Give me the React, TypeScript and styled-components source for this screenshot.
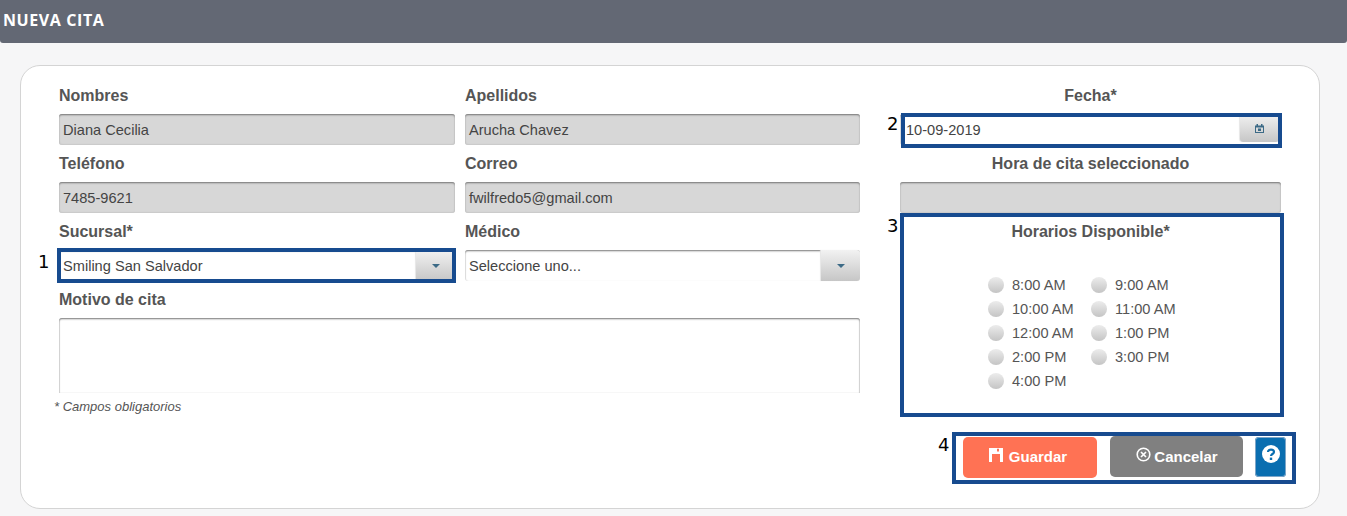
import React from 'react';
import styled, { createGlobalStyle } from 'styled-components';

const Global = createGlobalStyle`
  html, body { margin: 0; padding: 0; height: 516px; overflow: hidden; background: #f6f6f7; }
  * { box-sizing: border-box; }
  body {
    font-family: "Liberation Sans", Arial, sans-serif;
    color: #555;
  }
`;

const Header = styled.header`
  height: 43px;
  background: #636874;
  border-radius: 0 0 3px 3px;
  display: flex;
  align-items: center;
  padding: 0 0 3px 3px;
  color: #fff;
  font: 700 16px "Open Sans", sans-serif;
  letter-spacing: 0.6px;
`;

const Card = styled.main`
  margin: 22px 27px 0 20px;
  padding: 11px 38px 30px;
  background: #fff;
  border: 1px solid #d4d4d4;
  border-radius: 20px;
  display: flex;
  justify-content: space-between;
`;

const LeftArea = styled.section`
  width: 801px;
`;

const RightArea = styled.section`
  width: 381px;
`;

const Grid = styled.div`
  display: grid;
  grid-template-columns: 396px 395px;
  column-gap: 10px;
`;

const Field = styled.div<{ $wide?: boolean }>`
  position: relative;
  grid-column: ${(p) => (p.$wide ? '1 / -1' : 'auto')};
`;

const Label = styled.div<{ $center?: boolean }>`
  height: 37px;
  line-height: 37px;
  font-size: 16px;
  font-weight: 700;
  color: #555;
  text-align: ${(p) => (p.$center ? 'center' : 'left')};
`;

const Disabled = styled.div`
  height: 31px;
  padding: 0 4px;
  line-height: 32px;
  font-size: 14.6px;
  color: #444;
  background: #d7d7d7;
  border-radius: 3px;
  box-shadow: inset 0 2px 2px -1px #777, inset 0 0 2px #aaa;
`;

const Control = styled.div`
  height: 31px;
  display: flex;
  background: #fff;
  border-radius: 3px;
  box-shadow: inset 0 2px 2px -1px #777, inset 1px 0 1px #e0e0e0;
`;

const ControlText = styled.div<{ $inset?: number }>`
  flex: 1;
  padding: 0 4px 0 ${(p) => p.$inset ?? 4}px;
  line-height: 32px;
  font-size: 14.6px;
  color: #444;
`;

const SideButton = styled.div<{ $short?: boolean }>`
  width: 39px;
  height: ${(p) => (p.$short ? '28px' : '31px')};
  margin-right: ${(p) => (p.$short ? '2px' : '0')};
  display: flex;
  align-items: center;
  justify-content: center;
  background: linear-gradient(#f2f2f2, #c6c6c6);
  border-radius: 0 3px 3px ${(p) => (p.$short ? '3px' : '0')};
  box-shadow: -1px 0 1px #e6e6e6;
`;

const Caret = styled.span`
  width: 0;
  height: 0;
  border-left: 4px solid transparent;
  border-right: 4px solid transparent;
  border-top: 4px solid #3c6a86;
`;

const TextArea = styled.div`
  height: 75px;
  background: #fff;
  border-radius: 3px 3px 0 0;
  box-shadow: inset 0 2px 2px -1px #777, inset 1px 0 1px #d4d4d4, inset -1px 0 1px #d4d4d4;
`;

const Note = styled.p`
  margin: 6px 0 0 -5px;
  font-size: 13px;
  line-height: 15px;
  font-style: italic;
  color: #555;
`;

const Highlight = styled.div<{ $top: number; $right: number; $bottom: number; $left: number }>`
  position: absolute;
  top: ${(p) => p.$top}px;
  right: ${(p) => p.$right}px;
  bottom: ${(p) => p.$bottom}px;
  left: ${(p) => p.$left}px;
  border: 4px solid #174b8f;
  pointer-events: none;
`;

const Marker = styled.span<{ $top: number; $left: number }>`
  position: absolute;
  top: ${(p) => p.$top}px;
  left: ${(p) => p.$left}px;
  font: 18px/20px "DejaVu Sans", sans-serif;
  color: #000;
`;

const Slots = styled.div`
  position: relative;
  height: 204px;
  padding-top: 10px;
`;

const SlotsTitle = styled.div`
  font-size: 16px;
  font-weight: 700;
  line-height: 18px;
  text-align: center;
  color: #555;
`;

const SlotGrid = styled.div`
  margin-top: 32px;
  padding-left: 1px;
  display: grid;
  grid-template-columns: 103px 103px;
  grid-auto-rows: 24px;
  justify-content: center;
`;

const Slot = styled.div`
  display: flex;
  align-items: center;
  gap: 8px;
  font-size: 14.6px;
  color: #555;
`;

const Radio = styled.span`
  width: 16px;
  height: 16px;
  border-radius: 50%;
  background: linear-gradient(#ececec, #c4c4c4);
`;

const Actions = styled.div`
  position: relative;
  display: flex;
  align-items: flex-start;
  margin-top: 19px;
  padding-left: 63px;
  height: 42px;
`;

const ActionButton = styled.div<{ $bg: string; $w: number; $offset?: number; $gap?: number; $h?: number; $icon?: number; $pad?: string }>`
  flex: none;
  width: ${(p) => p.$w}px;
  height: ${(p) => p.$h ?? 41}px;
  margin-top: ${(p) => p.$offset ?? 0}px;
  margin-left: ${(p) => p.$gap ?? 0}px;
  padding: ${(p) => p.$pad ?? '0'};
  display: flex;
  align-items: center;
  justify-content: center;
  gap: ${(p) => p.$icon ?? 5}px;
  background: ${(p) => p.$bg};
  border-radius: 5px;
  color: #fff;
  font-size: 15px;
  font-weight: 700;
`;

const HelpButton = styled(ActionButton)`
  align-items: flex-start;
  padding: 8px 0 0;
  border-radius: 4px;
  box-shadow: inset 0 0 0 1px #7ea6c8;
`;

const FloppyIcon = () => (
  <svg width="14" height="14" viewBox="0 0 14 14" style={{ marginTop: -3 }}>
    <path fill="#fff" fillRule="evenodd" d="M0 0H14V14H11V6H3V14H0ZM8 0.800V3.500H10V0.800Z" />
  </svg>
);

const CancelIcon = () => (
  <svg width="15" height="15" viewBox="0 0 15 15" style={{ marginTop: -3 }}>
    <circle cx="7.500" cy="7.500" r="6.300" fill="none" stroke="#fff" strokeWidth="1.600" />
    <path d="M5 5L10 10M10 5L5 10" stroke="#fff" strokeWidth="1.700" />
  </svg>
);

const HelpIcon = () => (
  <svg width="18" height="18" viewBox="0 0 18 18">
    <circle cx="9" cy="9" r="9" fill="#fff" />
    <path d="M6 7C6 3.800 12 3.800 12 7C12 9 9 9 9 11" fill="none" stroke="#0a6eb0" strokeWidth="2.200" />
    <rect x="7.800" y="12.600" width="2.400" height="2.400" fill="#0a6eb0" />
  </svg>
);

const CalendarIcon = () => (
  <svg width="9" height="9" viewBox="0 0 9 9">
    <path fill="#3c6a86" fillRule="evenodd" d="M0 1.500H1.500V0H3V1.500H6V0H7.500V1.500H9V9H0ZM1 3.500V8H8V3.500Z" />
    <rect x="3" y="4.500" width="3" height="2.500" fill="#3c6a86" />
  </svg>
);

const slots = ['8:00 AM', '9:00 AM', '10:00 AM', '11:00 AM', '12:00 AM', '1:00 PM', '2:00 PM', '3:00 PM', '4:00 PM'];

export default function App() {
  return (
    <>
      <Global />
      <Header>NUEVA CITA</Header>
      <Card>
        <LeftArea>
          <Grid>
            <Field>
              <Label>Nombres</Label>
              <Disabled>Diana Cecilia</Disabled>
            </Field>
            <Field>
              <Label>Apellidos</Label>
              <Disabled>Arucha Chavez</Disabled>
            </Field>
            <Field>
              <Label>Teléfono</Label>
              <Disabled>7485-9621</Disabled>
            </Field>
            <Field>
              <Label>Correo</Label>
              <Disabled>fwilfredo5@gmail.com</Disabled>
            </Field>
            <Field>
              <Label>Sucursal*</Label>
              <Control>
                <ControlText>Smiling San Salvador</ControlText>
                <SideButton>
                  <Caret />
                </SideButton>
              </Control>
              <Highlight $top={35} $right={-1} $bottom={-2} $left={-2} />
              <Marker $top={39} $left={-21}>1</Marker>
            </Field>
            <Field>
              <Label>Médico</Label>
              <Control>
                <ControlText>Seleccione uno...</ControlText>
                <SideButton>
                  <Caret />
                </SideButton>
              </Control>
            </Field>
            <Field $wide>
              <Label>Motivo de cita</Label>
              <TextArea />
            </Field>
          </Grid>
          <Note>* Campos obligatorios</Note>
        </LeftArea>
        <RightArea>
          <Field>
            <Label $center>Fecha*</Label>
            <Control>
              <ControlText $inset={6}>10-09-2019</ControlText>
              <SideButton $short>
                <CalendarIcon />
              </SideButton>
            </Control>
            <Highlight $top={36} $right={-1} $bottom={-3} $left={1} />
            <Marker $top={37} $left={-13}>2</Marker>
          </Field>
          <Field>
            <Label $center>Hora de cita seleccionado</Label>
            <Disabled />
          </Field>
          <Slots>
            <SlotsTitle>Horarios Disponible*</SlotsTitle>
            <SlotGrid>
              {slots.map((s) => (
                <Slot key={s}>
                  <Radio />
                  {s}
                </Slot>
              ))}
            </SlotGrid>
            <Highlight $top={0} $right={-3} $bottom={0} $left={0} />
            <Marker $top={3} $left={-13}>3</Marker>
          </Slots>
          <Actions>
            <ActionButton $bg="#ff7254" $w={134} $offset={1} $icon={6} $pad="0 4px 2px 0">
              <FloppyIcon />
              Guardar
            </ActionButton>
            <ActionButton $bg="#808080" $w={133} $gap={13} $h={41} $icon={3} $pad="0 0 1px 1px">
              <CancelIcon />
              Cancelar
            </ActionButton>
            <HelpButton $bg="#0a6eb0" $w={31} $gap={12} $offset={1} $h={40}>
              <HelpIcon />
            </HelpButton>
            <Highlight $top={-4} $right={-15} $bottom={-6} $left={52} />
            <Marker $top={-1} $left={38}>4</Marker>
          </Actions>
        </RightArea>
      </Card>
    </>
  );
}
